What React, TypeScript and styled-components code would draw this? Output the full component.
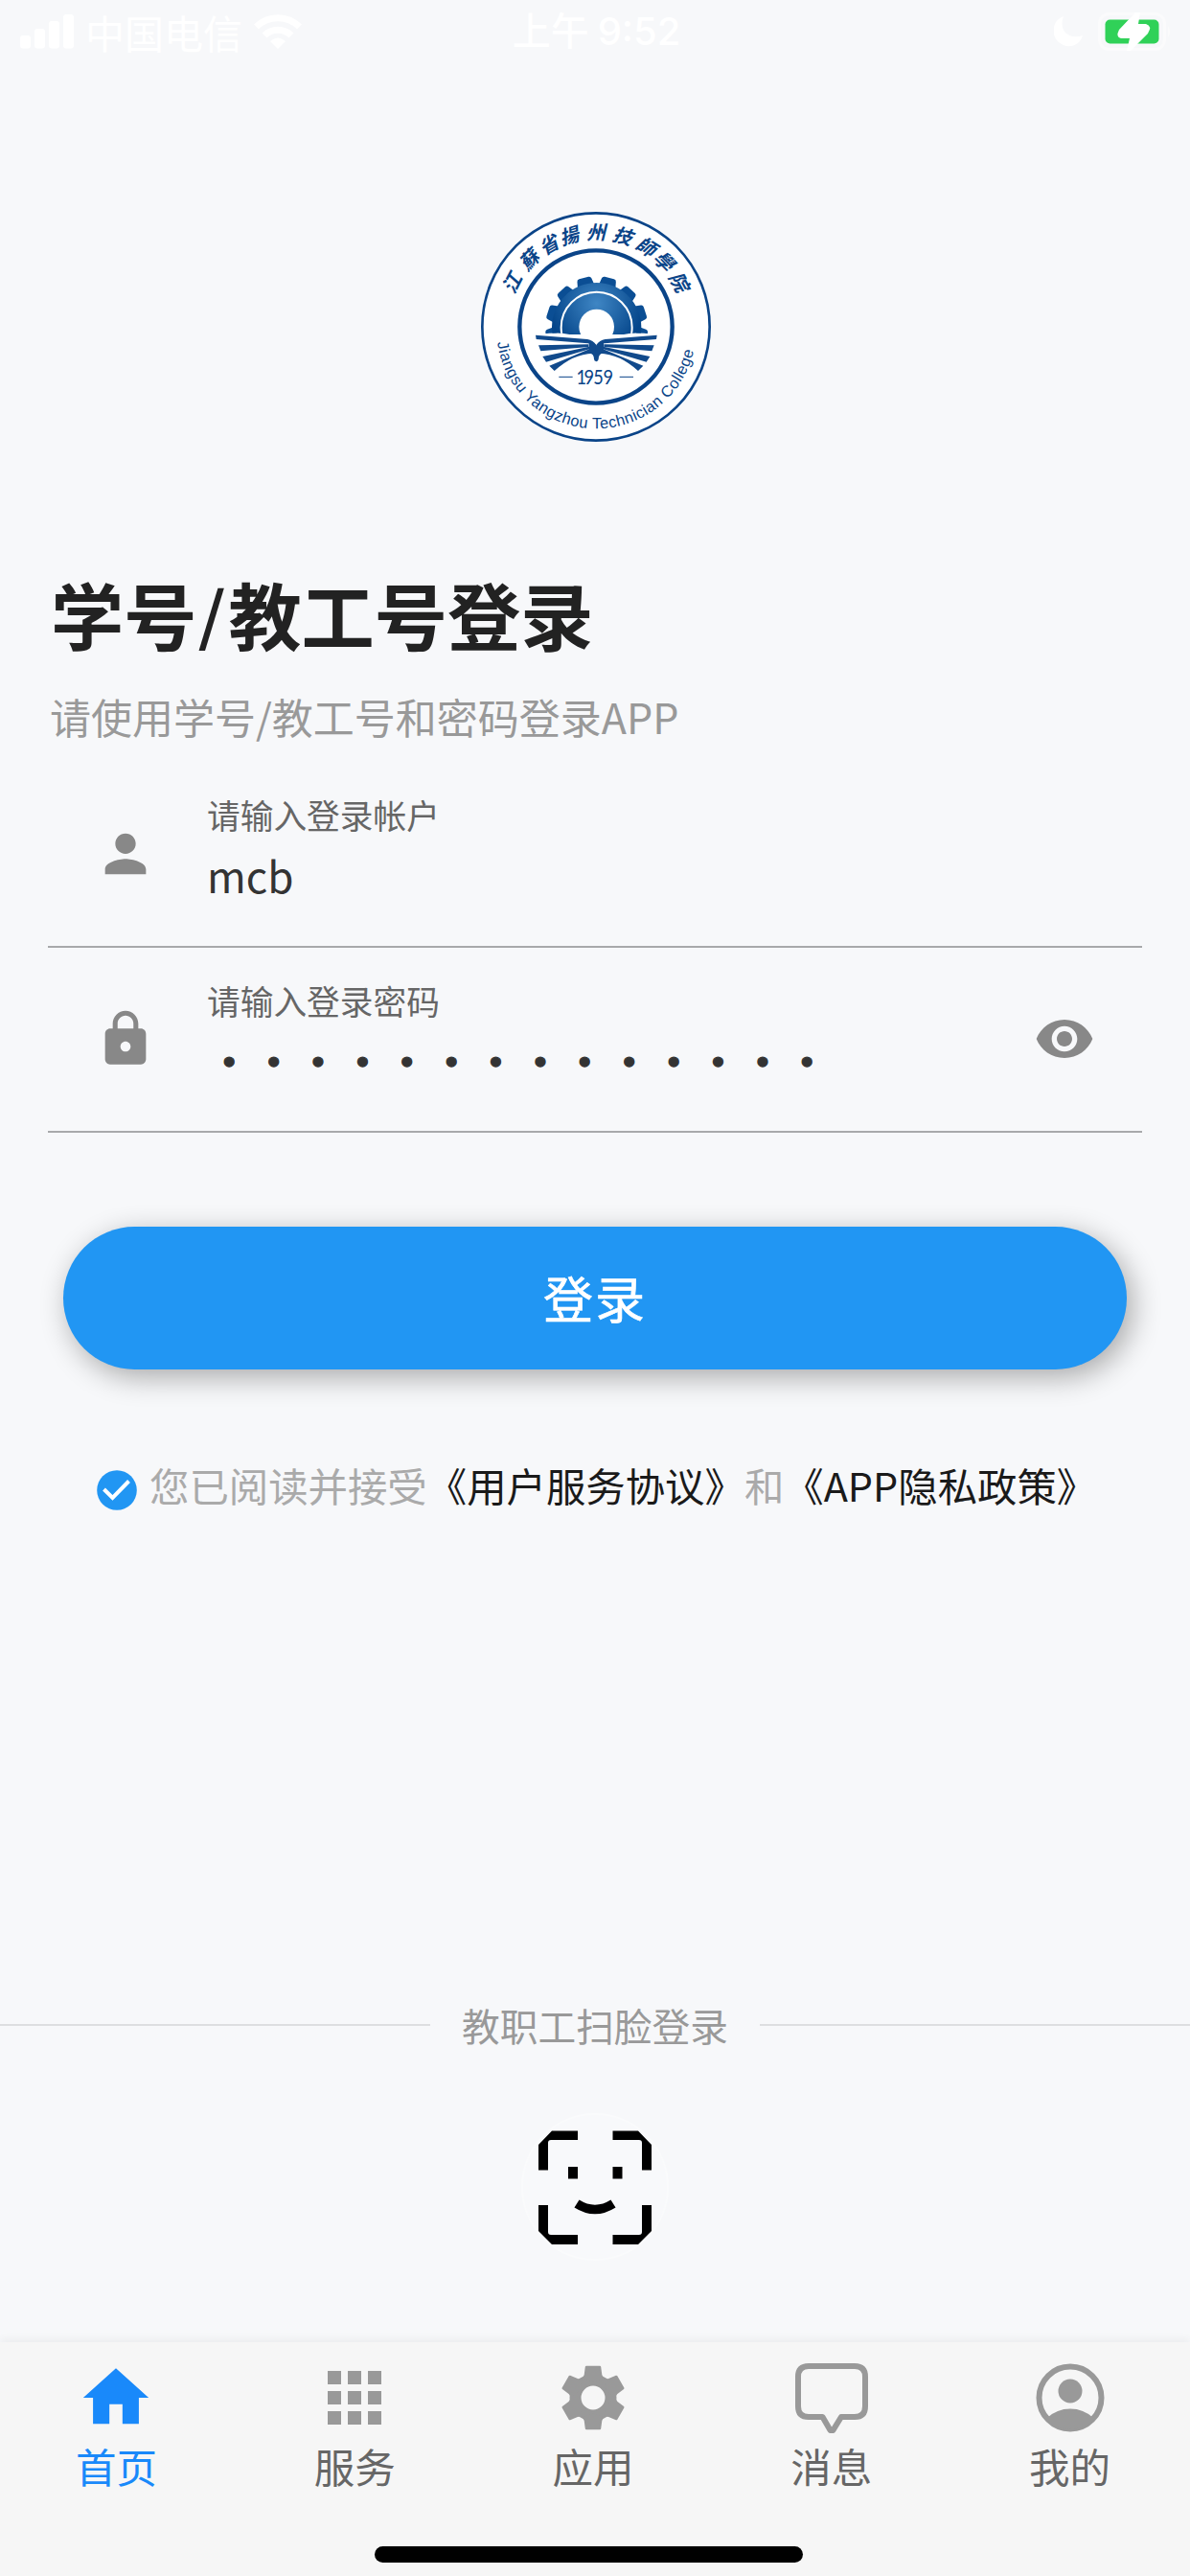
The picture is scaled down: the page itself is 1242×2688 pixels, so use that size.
import React from 'react';
import styled, { createGlobalStyle } from 'styled-components';
import { MdApps, MdHome, MdLock, MdPerson, MdVisibility } from 'react-icons/md';

const GlobalStyle = createGlobalStyle`
  * {
    box-sizing: border-box;
  }
  body {
    margin: 0;
    background: #f7f8fa;
    font-family: "Noto Sans CJK SC", sans-serif;
  }
`;

const Page = styled.div`
  display: flex;
  flex-direction: column;
  width: 1242px;
  height: 2688px;
  overflow: hidden;
  background: #f7f8fa;
`;

const StatusBar = styled.header`
  display: grid;
  grid-template-columns: 1fr auto 1fr;
  align-items: center;
  height: 66px;
  padding: 0 18px 0 21px;
  color: #fff;
  font-size: 41px;
  line-height: 66px;
`;

const Carrier = styled.div`
  display: flex;
  align-items: center;
  gap: 12px;

  svg {
    display: block;
  }
`;

const Clock = styled.div`
  display: flex;
  gap: 9px;
  font-family: Inter, "Noto Sans CJK SC", sans-serif;
  font-weight: 500;
  font-size: 40px;
`;

const Power = styled.div`
  display: flex;
  justify-content: flex-end;
  align-items: center;
  gap: 15px;
`;

const LogoWrap = styled.div`
  display: flex;
  justify-content: center;
  height: 414px;
  padding-top: 134px;
`;

const Title = styled.h1`
  display: flex;
  margin: 115px 0 0 53px;
  color: #222;
  font-size: 76.2px;
  font-weight: 700;
  line-height: 90px;
`;

const Slash = styled.span`
  width: 33px;
  font-size: 66px;
  text-align: center;
  transform: translateY(-2px) skewX(-3deg);
`;

const Subtitle = styled.p`
  margin: 32px 0 0 52px;
  color: #999;
  font-size: 43px;
  line-height: 60px;
`;

const Form = styled.div`
  margin: 18px 50px 0;
`;

const Field = styled.div`
  display: flex;
  align-items: center;
  height: 193.5px;
  padding: 0 49px;
  border-bottom: 2px solid #a8a9ab;
  color: #888;
`;

const FieldText = styled.div`
  flex: 1;
  height: 100%;
  margin-left: 53px;
  padding-top: 33px;
`;

const Label = styled.div`
  color: #666;
  font-size: 34.7px;
  line-height: 44px;
`;

const Value = styled.div<{ $masked?: boolean }>`
  margin-top: ${props => (props.$masked ? 10 : 11)}px;
  color: #333;
  font-size: ${props => (props.$masked ? 46.4 : 44)}px;
  -webkit-text-stroke: ${props => (props.$masked ? '1.4px #333' : '0')};
  line-height: 60px;
  white-space: nowrap;
`;

const LoginButton = styled.button`
  height: 149px;
  margin: 98px 66px 0;
  padding: 0 0 3px;
  border: 0;
  border-radius: 75px;
  background: #2196f3;
  box-shadow: 6px 8px 30px rgba(0, 0, 0, 0.32);
  color: #fff;
  font-family: inherit;
  font-size: 52px;
  letter-spacing: 2px;
  -webkit-text-stroke: 0.6px #fff;
`;

const Terms = styled.div`
  display: flex;
  align-items: flex-start;
  margin: 90px 0 0 101px;
  color: #aaa;
  font-size: 41.4px;
  line-height: 60px;
  white-space: nowrap;

  svg {
    margin: 15px 13px 0 0;
  }
`;

const TermsLink = styled.span`
  color: #1a1a1a;
`;

const Divider = styled.div`
  display: flex;
  align-items: center;
  gap: 33px;
  margin-top: 503.5px;
  color: #999;
  font-size: 39.7px;
  line-height: 60px;

  &::before,
  &::after {
    content: "";
    flex: 1;
    height: 2px;
    background: #dddee0;
  }
`;

const FaceLogin = styled.div`
  display: flex;
  justify-content: center;
  margin-top: 62px;
`;

const TabBar = styled.nav`
  display: flex;
  flex-direction: column;
  height: 244.5px;
  margin-top: auto;
  background: #f6f6f6;
  box-shadow: 0 -2px 10px rgba(0, 0, 0, 0.06);
`;

const Tabs = styled.div`
  display: flex;
  width: 1244px;
  height: 213px;
  margin-left: -3px;
  padding-top: 16px;
`;

const Tab = styled.div<{ $active?: boolean }>`
  display: flex;
  flex: 1;
  flex-direction: column;
  align-items: center;
  color: ${props => (props.$active ? '#1989fa' : '#666')};
  font-size: 42.5px;
  line-height: 50px;
`;

const TabIcon = styled.div<{ $active?: boolean }>`
  display: flex;
  align-items: center;
  justify-content: center;
  height: 84px;
  margin-bottom: 4px;
  color: ${props => (props.$active ? '#1989fa' : '#999')};
`;

const HomeIndicator = styled.div`
  width: 447px;
  height: 17px;
  margin-left: 391px;
  border-radius: 9px;
  background: #000;
`;

const SEAL_CHARS: [string, number][] = [
  ['江', -62.5],
  ['蘇', -45],
  ['省', -30],
  ['揚', -16.5],
  ['州', 0],
  ['技', 16.5],
  ['師', 32],
  ['學', 46],
  ['院', 61.5],
];

const TEETH = [-101, -72, -43, -14.5, 14.5, 43, 72, 101];

function BookHalf() {
  return (
    <g fill="#114a8c">
      <path d="M234 449 L396 462 Q414 465 424 480 V488 Q414 477 398 475 L236 462 Z" />
      <path d="M243 481 L400 478 V486 L250 499 Z" />
      <path d="M256 516 L402 485 L405 492 L267 533 Z" />
      <path d="M277 545 L404 492 L414 506 Q350 508 293 561 Z" />
      <path d="M401 472 Q418 470 425 484 V532 Q417 531 417 524 Q417 508 401 504 Z" />
    </g>
  );
}

function CollegeLogo() {
  return (
    <svg width="280" height="280" viewBox="0 0 840 840">
      <defs>
        <radialGradient id="gear" gradientUnits="userSpaceOnUse" cx="425" cy="350" r="150">
          <stop offset="0" stopColor="#3f86c4" />
          <stop offset="1" stopColor="#04458a" />
        </radialGradient>
        <clipPath id="upper">
          <path d="M250 240 H600 V446 Q540 438 510 447 H340 Q310 438 250 446 Z" />
        </clipPath>
        <path id="lowerArc" d="M114 472 A313 313 0 0 0 734 472" />
      </defs>
      <circle cx="423" cy="423" r="356" fill="#fff" stroke="#0a4488" strokeWidth="8" />
      <circle cx="423" cy="423" r="239" fill="none" stroke="#0a4488" strokeWidth="13" />
      {SEAL_CHARS.map(([char, angle]) => (
        <text
          key={char}
          x="423"
          y="149"
          fontSize="60"
          fontWeight="700"
          fontStyle="italic"
          textAnchor="middle"
          fill="#0a4488"
          transform={`rotate(${angle} 423 423)`}
        >
          {char}
        </text>
      ))}
      <text fontFamily="Liberation Sans, Arial, sans-serif" fontSize="49" fill="#0a4488">
        <textPath href="#lowerArc" textLength="870" lengthAdjust="spacing">
          Jiangsu Yangzhou Technician College
        </textPath>
      </text>
      <g clipPath="url(#upper)">
        {TEETH.map(angle => (
          <path
            key={angle}
            d="M397 300 L402 272 Q403 265 410 265 H440 Q447 265 448 272 L453 300 Z"
            fill="#0b4e94"
            transform={`rotate(${angle} 425 425)`}
          />
        ))}
        <circle cx="425" cy="425" r="140" fill="url(#gear)" />
        <circle cx="425" cy="425" r="111" fill="none" stroke="#fff" strokeWidth="6" />
        <circle cx="425" cy="423" r="55" fill="#fff" />
      </g>
      <BookHalf />
      <g transform="translate(848 0) scale(-1 1)">
        <BookHalf />
      </g>
      <path d="M307 580 H350 M497 580 H540" stroke="#0a4488" strokeWidth="3" />
      <text
        x="411 438 471 506"
        y="602"
        transform="scale(0.88 1)"
        fontFamily="Lato, sans-serif"
        fontSize="62"
        fill="#0a4488"
      >
        1959
      </text>
    </svg>
  );
}

function FaceIcon() {
  return (
    <svg width="154" height="154" viewBox="0 0 154 154">
      <circle cx="77" cy="77" r="76" fill="#f8f9fb" stroke="#fafbfc" strokeWidth="2" />
      <path d="M18 59.500 V33 L32 18.500 H59 V28 H31 Q28 28 28 31 V59.500 Z" />
      <path d="M136 59.500 V33 L122 18.500 H95.500 V28 H123 Q126 28 126 31 V59.500 Z" />
      <path d="M18 96 V123 L32 137 H59 V127 H31 Q28 127 28 124 V96 Z" />
      <path d="M136 96 V123 L122 137 H95.500 V127 H123 Q126 127 126 124 V96 Z" />
      <rect x="49" y="56" width="10" height="12.500" />
      <rect x="95.500" y="56" width="10" height="12.500" />
      <path d="M58 94.500 Q77 106.500 96 94.500" fill="none" stroke="#000" strokeWidth="9.500" />
    </svg>
  );
}

function GearIcon() {
  return (
    <svg width="68" height="68" viewBox="-34 -34 68 68" fill="currentColor">
      <circle r="18.500" fill="none" stroke="currentColor" strokeWidth="12" />
      {[0, 60, 120, 180, 240, 300].map(angle => (
        <path
          key={angle}
          d="M-7 -33.300 H7 Q8 -33.300 8.200 -32.300 L9.300 -24 Q9.800 -22 12 -20 L0 -16 L-12 -20 Q-9.800 -22 -9.300 -24 L-8.200 -32.300 Q-8 -33.300 -7 -33.300 Z"
          transform={`rotate(${angle})`}
        />
      ))}
    </svg>
  );
}

function ChatIcon() {
  return (
    <svg width="78" height="74" viewBox="0 0 78 74">
      <path
        d="M15 4 H63 Q74 4 74 15 V46 Q74 57 63 57 H49 L41 70 Q39 73 37 70 L29.500 57 H15 Q4 57 4 46 V15 Q4 4 15 4 Z"
        fill="none"
        stroke="currentColor"
        strokeWidth="6"
        strokeLinejoin="round"
      />
    </svg>
  );
}

function ProfileIcon() {
  return (
    <svg width="72" height="72" viewBox="0 0 72 72" fill="currentColor">
      <circle cx="36" cy="36" r="32.500" fill="none" stroke="currentColor" strokeWidth="6" />
      <circle cx="36" cy="29" r="12.500" />
      <path d="M12 57 Q22 47.500 36 47.500 Q50 47.500 60 57 Q50 69 36 69 Q22 69 12 57 Z" />
    </svg>
  );
}

const tabs = [
  { label: '首页', icon: <MdHome size={82} />, active: true },
  { label: '服务', icon: <MdApps size={84} /> },
  { label: '应用', icon: <GearIcon /> },
  { label: '消息', icon: <ChatIcon /> },
  { label: '我的', icon: <ProfileIcon /> },
];

export default function App(): React.ReactElement {
  return (
    <Page>
      <GlobalStyle />
      <StatusBar>
        <Carrier>
          <svg width="56" height="36" viewBox="0 0 56 36" fill="#fff">
            <rect x="0" y="22" width="11" height="13.500" rx="3" />
            <rect x="15" y="15" width="11" height="20.500" rx="3" />
            <rect x="30" y="7" width="11" height="28.500" rx="3" />
            <rect x="45" y="0" width="11" height="35.500" rx="3" />
          </svg>
          <span>中国电信</span>
          <svg width="50" height="37" viewBox="0 0 50 37" fill="none" stroke="#fff" strokeWidth="7">
            <path d="M2.500 13 A32 32 0 0 1 47.500 13" />
            <path d="M11 22 A20 20 0 0 1 39 22" />
            <path d="M25 36 L17 28 Q25 21 33 28 Z" fill="#fff" stroke="none" />
          </svg>
        </Carrier>
        <Clock>
          <span>上午</span>
          <span>9:52</span>
        </Clock>
        <Power>
          <svg width="31" height="32" viewBox="0 0 31 32">
            <path d="M10 0 C-3 5 -3 21 5 27 C14 35 27 31 30 20 C13 25 5 13 10 0 Z" fill="#fff" />
          </svg>
          <svg width="78" height="40" viewBox="0 0 78 40">
            <rect x="1.500" y="1.500" width="68" height="37" rx="10" fill="none" stroke="#fbfbfc" strokeWidth="3" />
            <path d="M73 14 Q77 20 73 26 Z" fill="#fbfbfc" />
            <rect x="7.500" y="7.500" width="56" height="25" rx="5" fill="#30d158" />
            <path
              d="M39 0 L22 18 Q18 26 24 27 H33 L30 40 H34 L52 22 Q57 14 50 12 H42 L44 0 Z"
              fill="#fff"
            />
          </svg>
        </Power>
      </StatusBar>

      <LogoWrap>
        <CollegeLogo />
      </LogoWrap>

      <Title>
        学号<Slash>/</Slash>教工号登录
      </Title>
      <Subtitle>请使用学号/教工号和密码登录APP</Subtitle>

      <Form>
        <Field>
          <MdPerson size={64} />
          <FieldText>
            <Label>请输入登录帐户</Label>
            <Value>mcb</Value>
          </FieldText>
        </Field>
        <Field>
          <MdLock size={64} />
          <FieldText>
            <Label>请输入登录密码</Label>
            <Value $masked>{'•'.repeat(14)}</Value>
          </FieldText>
          <MdVisibility size={64} />
        </Field>
      </Form>

      <LoginButton>登录</LoginButton>

      <Terms>
        <svg width="42" height="42" viewBox="0 0 42 42">
          <circle cx="21" cy="21" r="20.800" fill="#2196f3" />
          <path d="M7.500 20 L16.500 29 L33.500 11.500" fill="none" stroke="#fff" strokeWidth="4" />
        </svg>
        <span>您已阅读并接受</span>
        <TermsLink>《用户服务协议》</TermsLink>
        <span>和</span>
        <TermsLink>《APP隐私政策》</TermsLink>
      </Terms>

      <Divider>教职工扫脸登录</Divider>
      <FaceLogin>
        <FaceIcon />
      </FaceLogin>

      <TabBar>
        <Tabs>
          {tabs.map(tab => (
            <Tab key={tab.label} $active={tab.active}>
              <TabIcon $active={tab.active}>{tab.icon}</TabIcon>
              {tab.label}
            </Tab>
          ))}
        </Tabs>
        <HomeIndicator />
      </TabBar>
    </Page>
  );
}
